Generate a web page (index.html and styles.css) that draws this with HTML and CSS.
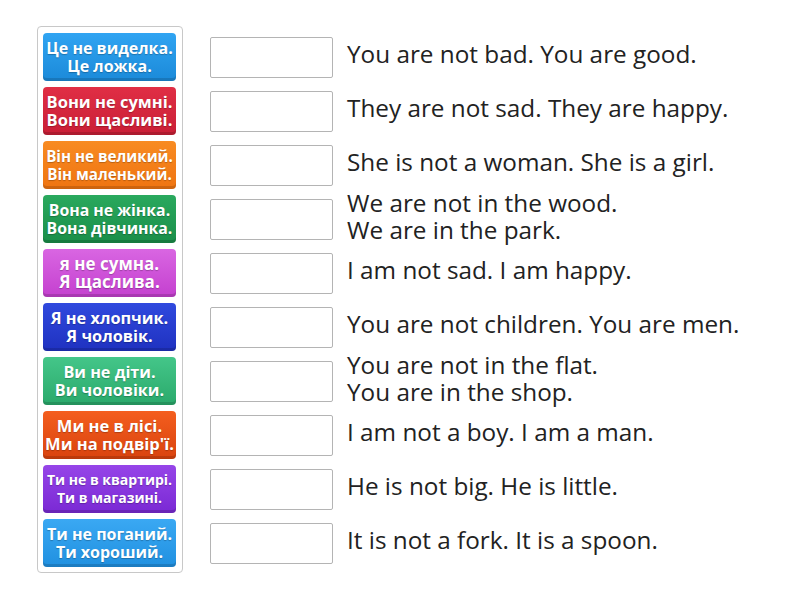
FILE: index.html
```html
<!DOCTYPE html>
<html lang="uk">
<head>
<meta charset="utf-8">
<title>Match up</title>
<link rel="stylesheet" href="styles.css">
</head>
<body>
<main class="board">
  <section class="bank">
    <div class="tile t-blue fs-160">Це не виделка.<br>Це ложка.</div>
    <div class="tile t-red fs-165">Вони не сумні.<br>Вони щасливі.</div>
    <div class="tile t-orange fs-152">Він не великий.<br>Він маленький.</div>
    <div class="tile t-green fs-158">Вона не жінка.<br>Вона дівчинка.</div>
    <div class="tile t-pink fs-170">я не сумна.<br>Я щаслива.</div>
    <div class="tile t-indigo fs-163">Я не хлопчик.<br>Я чоловік.</div>
    <div class="tile t-teal fs-162">Ви не діти.<br>Ви чоловіки.</div>
    <div class="tile t-vermilion fs-165">Ми не в лісі.<br>Ми на подвір'ї.</div>
    <div class="tile t-purple fs-140">Ти не в квартирі.<br>Ти в магазині.</div>
    <div class="tile t-sky fs-160">Ти не поганий.<br>Ти хороший.</div>
  </section>
  <section class="targets">
    <div class="row"><div class="slot"></div><p class="clue">You are not bad. You are good.</p></div>
    <div class="row"><div class="slot"></div><p class="clue">They are not sad. They are happy.</p></div>
    <div class="row"><div class="slot"></div><p class="clue">She is not a woman. She is a girl.</p></div>
    <div class="row"><div class="slot"></div><p class="clue">We are not in the wood.<br>We are in the park.</p></div>
    <div class="row"><div class="slot"></div><p class="clue">I am not sad. I am happy.</p></div>
    <div class="row"><div class="slot"></div><p class="clue">You are not children. You are men.</p></div>
    <div class="row"><div class="slot"></div><p class="clue">You are not in the flat.<br>You are in the shop.</p></div>
    <div class="row"><div class="slot"></div><p class="clue">I am not a boy. I am a man.</p></div>
    <div class="row"><div class="slot"></div><p class="clue">He is not big. He is little.</p></div>
    <div class="row"><div class="slot"></div><p class="clue">It is not a fork. It is a spoon.</p></div>
  </section>
</main>
</body>
</html>
```
FILE: styles.css
```css
* { box-sizing: border-box; }
html, body { margin: 0; padding: 0; background: #fff; }
body {
  font-family: "Open Sans", "Noto Sans", sans-serif;
  width: 800px;
  height: 600px;
  overflow: hidden;
}
.board {
  display: flex;
  align-items: flex-start;
  padding: 26px 0 0 37px;
}
.bank {
  width: 146px;
  border: 1px solid #c8c8c8;
  border-radius: 4px;
  padding: 6px 6px 5px 5px;
  display: flex;
  flex-direction: column;
  gap: 6px;
}
.tile {
  height: 48px;
  border-radius: 4px;
  color: #fff;
  font-weight: 700;
  font-size: 16px;
  line-height: 18px;
  text-align: center;
  display: flex;
  align-items: center;
  justify-content: center;
  text-shadow: 0 1px 1px rgba(0,0,0,0.25);
  white-space: nowrap;
  box-shadow: inset 0 -3px 0 rgba(0,0,0,0.14);
}
.fs-140 { font-size: 14px; }
.fs-152 { font-size: 15.2px; }
.fs-158 { font-size: 15.8px; }
.fs-160 { font-size: 16px; }
.fs-162 { font-size: 16.2px; }
.fs-163 { font-size: 16.3px; }
.fs-165 { font-size: 16.5px; }
.fs-170 { font-size: 17px; }

.t-blue { background: linear-gradient(#30a4f2, #1b8ad9); }
.t-red { background: linear-gradient(#e02e45, #c91f36); }
.t-orange { background: linear-gradient(#f88b22, #ef7411); }
.t-green { background: linear-gradient(#2aa95e, #1a8e49); }
.t-pink { background: linear-gradient(#d966e2, #c440cf); }
.t-indigo { background: linear-gradient(#3049de, #1f31c0); }
.t-teal { background: linear-gradient(#44c689, #2aa96b); }
.t-vermilion { background: linear-gradient(#f45e1e, #d9430f); }
.t-purple { background: linear-gradient(#9645e8, #7a29d4); }
.t-sky { background: linear-gradient(#3aa8f3, #2090e0); }

.targets {
  margin-left: 27px;
  padding-top: 7px;
  display: flex;
  flex-direction: column;
  gap: 6px;
}
.row {
  height: 48px;
  display: flex;
  align-items: center;
}
.slot {
  width: 123px;
  height: 41px;
  border: 1px solid #b4b4b4;
  border-radius: 2px;
  background: #fff;
  flex: none;
}
.clue {
  margin: 0 0 0 14px;
  padding-bottom: 7px;
  font-size: 24.3px;
  line-height: 27px;
  color: #222;
  white-space: nowrap;
}
```
